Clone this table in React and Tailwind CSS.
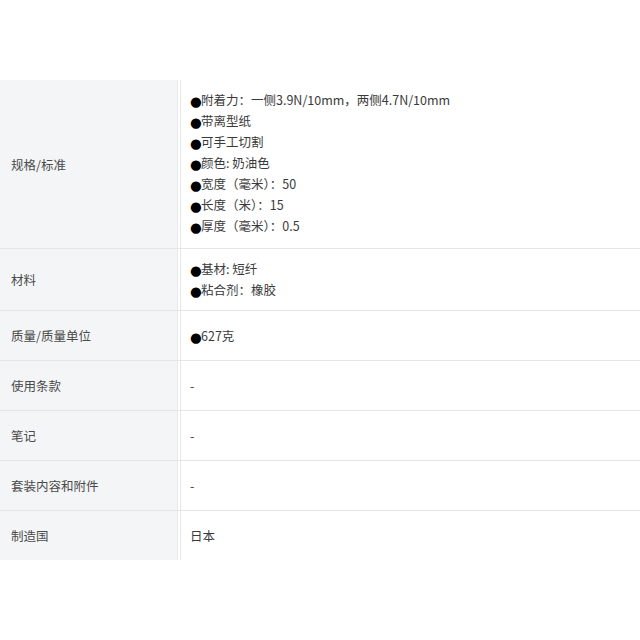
const rows = [
  {
    label: '规格/标准',
    items: [
      '附着力：一侧3.9N/10mm，两侧4.7N/10mm',
      '带离型纸',
      '可手工切割',
      '颜色: 奶油色',
      '宽度（毫米）：50',
      '长度（米）：15',
      '厚度（毫米）：0.5',
    ],
    pad: 'pt-[9px] pb-[12px]',
  },
  { label: '材料', items: ['基材: 短纤', '粘合剂：橡胶'], pad: 'pt-[9px] pb-[10px]' },
  { label: '质量/质量单位', items: ['627克'], pad: 'py-[14px]' },
  { label: '使用条款', text: '-' },
  { label: '笔记', text: '-' },
  { label: '套装内容和附件', text: '-' },
  { label: '制造国', text: '日本' },
]

function Bullet() {
  return (
    <span className="inline-block w-[11px] h-[21px] leading-[24px] font-['DejaVu_Sans'] text-black text-[13.5px] align-top">
      ●
    </span>
  )
}

export default function App() {
  return (
    <div className="w-[640px] h-[640px] bg-white font-['Noto_Sans_CJK_SC',sans-serif] text-[12.5px] leading-[21px]">
      <div className="pt-[80px]">
        {rows.map((r, i) => (
          <div
            key={r.label}
            className={`flex ${i > 0 ? 'border-t border-[#e4e5e7]' : ''}`}
          >
            <div className="w-[178px] shrink-0 bg-[#f4f5f7] border-r border-[#e8e9eb] flex items-center pl-[11px] text-[#4a4a4a]">
              {r.label}
            </div>
            <div className={`flex-1 border-l border-[#e6e7e9] ml-[2px] pl-[9px] text-[#3a3a3a] ${r.pad ?? 'py-[14px]'}`}>
              {r.items
                ? r.items.map(t => (
                    <div key={t} className="h-[21px]">
                      <Bullet />
                      {t}
                    </div>
                  ))
                : <div>{r.text}</div>}
            </div>
          </div>
        ))}
      </div>
    </div>
  )
}
